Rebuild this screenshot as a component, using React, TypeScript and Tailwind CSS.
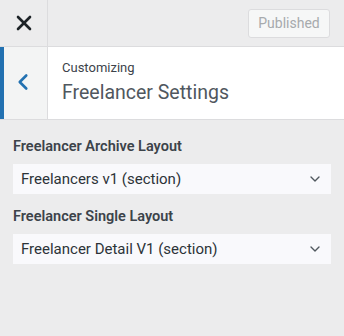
import { X, ChevronLeft, ChevronDown } from "lucide-react";

const App = () => {
  const fields = [
    { label: "Freelancer Archive Layout", value: "Freelancers v1 (section)" },
    { label: "Freelancer Single Layout", value: "Freelancer Detail V1 (section)" },
  ];

  return (
    <div className="w-[344px] h-[336px] bg-[#ececed] text-[#2c3338] font-['Roboto',sans-serif] overflow-hidden">
      {/* Top bar */}
      <div className="flex h-[47px] border-b border-[#dcdcde]">
        <div className="w-[48px] flex items-center justify-center border-r border-[#dcdcde]">
          <X className="h-[24px] w-[24px] text-[#1d2327]" strokeWidth={2.6} />
        </div>
        <div className="flex-1 flex items-center justify-end pr-[14px]">
          <div className="h-[29px] w-[82px] flex items-center justify-center rounded-[3px] border border-[#dcdcde] bg-[#f6f7f7] text-[14px] text-[#a7aaad]">
            Published
          </div>
        </div>
      </div>

      {/* Section header */}
      <div className="flex h-[73px] bg-white border-b border-[#dcdcde]">
        <div className="w-[48px] flex items-center justify-center bg-[#f3f4f4] border-l-4 border-[#2271b1] border-r border-r-[#dcdcde]">
          <ChevronLeft className="h-[26px] w-[26px] text-[#2271b1] -ml-[6px] -mt-[2px]" strokeWidth={2.4} />
        </div>
        <div className="flex-1 pl-[14px] pt-[13px]">
          <div className="text-[13px] leading-[16px] text-[#3c434a]">Customizing</div>
          <div className="text-[19.5px] leading-[26px] mt-[4px] text-[#50575e]">Freelancer Settings</div>
        </div>
      </div>

      {/* Controls */}
      <div className="px-[13px] pt-[18px] flex flex-col gap-[14px]">
        {fields.map((f, i) => (
          <div key={i}>
            <div className="text-[14.5px] font-semibold leading-[18px] mb-[8px] text-[#3c434a]">{f.label}</div>
            <div className="h-[30px] bg-[#f9f9fc] flex items-center justify-between pl-[8px] pr-[8px]">
              <span className="text-[15px] text-[#2c3338]">{f.value}</span>
              <ChevronDown className="h-[16px] w-[16px] text-[#50575e]" strokeWidth={2} />
            </div>
          </div>
        ))}
      </div>
    </div>
  );
};

export default App;
